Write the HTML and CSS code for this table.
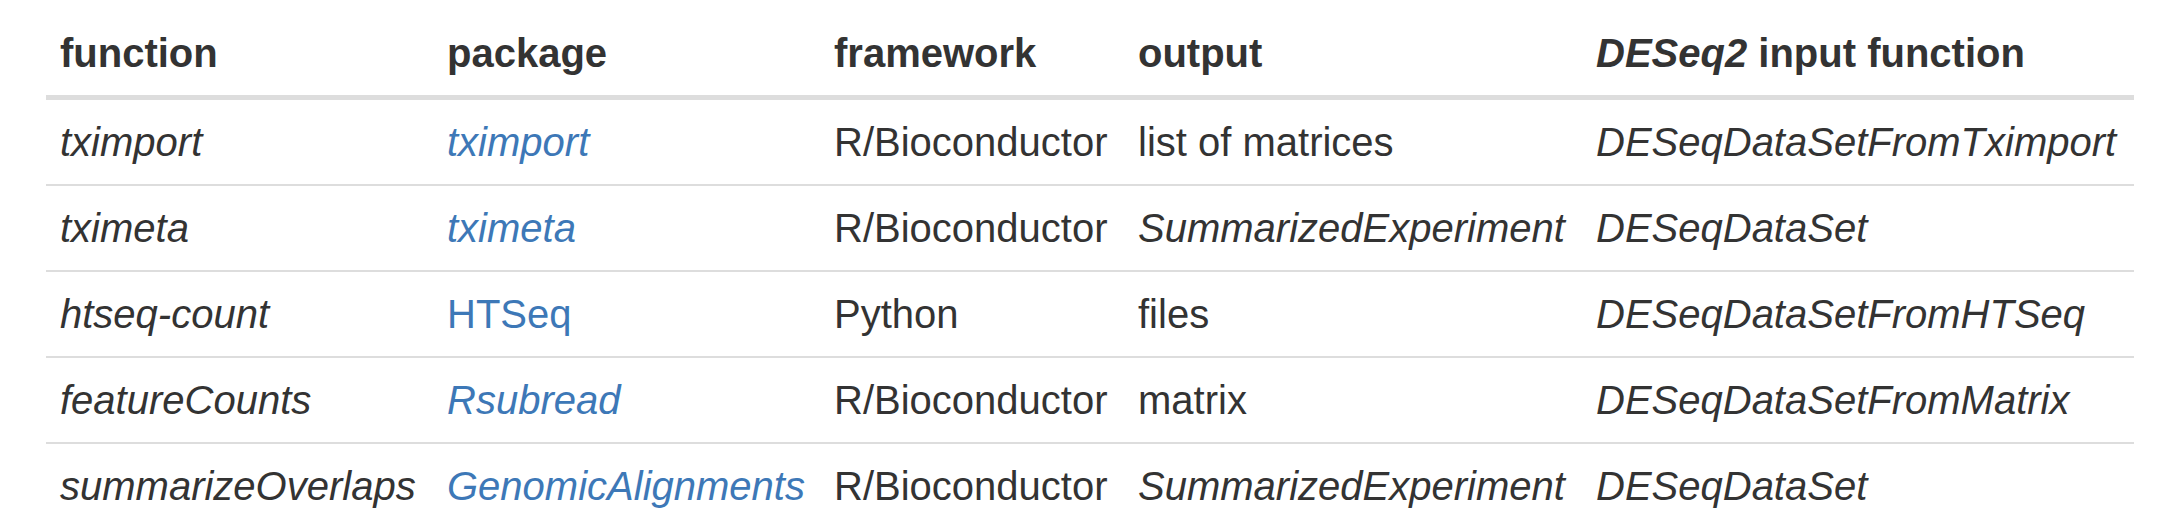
FILE: index.html
```html
<!DOCTYPE html>
<html lang="en">
<head>
<meta charset="utf-8">
<title>DESeq2 input functions</title>
<link rel="stylesheet" href="styles.css">
</head>
<body>
<div class="page">
  <table class="tbl">
    <colgroup>
      <col class="c1"><col class="c2"><col class="c3"><col class="c4"><col class="c5">
    </colgroup>
    <thead>
      <tr>
        <th>function</th>
        <th>package</th>
        <th>framework</th>
        <th>output</th>
        <th><em>DESeq2</em> input function</th>
      </tr>
    </thead>
    <tbody>
      <tr>
        <td><em>tximport</em></td>
        <td><a href="#"><em>tximport</em></a></td>
        <td>R/Bioconductor</td>
        <td>list of matrices</td>
        <td><em>DESeqDataSetFromTximport</em></td>
      </tr>
      <tr>
        <td><em>tximeta</em></td>
        <td><a href="#"><em>tximeta</em></a></td>
        <td>R/Bioconductor</td>
        <td><em>SummarizedExperiment</em></td>
        <td><em>DESeqDataSet</em></td>
      </tr>
      <tr>
        <td><em>htseq-count</em></td>
        <td><a href="#">HTSeq</a></td>
        <td>Python</td>
        <td>files</td>
        <td><em>DESeqDataSetFromHTSeq</em></td>
      </tr>
      <tr>
        <td><em>featureCounts</em></td>
        <td><a href="#"><em>Rsubread</em></a></td>
        <td>R/Bioconductor</td>
        <td>matrix</td>
        <td><em>DESeqDataSetFromMatrix</em></td>
      </tr>
      <tr>
        <td><em>summarizeOverlaps</em></td>
        <td><a href="#"><em>GenomicAlignments</em></a></td>
        <td>R/Bioconductor</td>
        <td><em>SummarizedExperiment</em></td>
        <td><em>DESeqDataSet</em></td>
      </tr>
    </tbody>
  </table>
</div>
</body>
</html>
```

FILE: styles.css
```css
html, body {
  margin: 0;
  padding: 0;
  background: #ffffff;
}

.page {
  padding: 11px 44px 0 46px;
  font-family: "Liberation Sans", Arial, Helvetica, sans-serif;
  font-size: 40px;
  color: #333333;
}

.tbl {
  width: 2088px;
  border-collapse: collapse;
  border-spacing: 0;
  table-layout: fixed;
}

.c1 { width: 387px; }
.c2 { width: 387px; }
.c3 { width: 304px; }
.c4 { width: 458px; }
.c5 { width: 552px; }

.tbl th,
.tbl td {
  padding: 14px 14px;
  line-height: 56px;
  text-align: left;
  vertical-align: top;
  white-space: nowrap;
}

.tbl th {
  font-weight: bold;
  border-bottom: 5px solid #dddddd;
}

.tbl td {
  border-top: 2px solid #dddddd;
}

.tbl tbody tr:first-child td {
  border-top: 0;
}

.tbl em {
  font-style: italic;
}

.tbl a {
  color: #3d78b7;
  text-decoration: none;
}
```
